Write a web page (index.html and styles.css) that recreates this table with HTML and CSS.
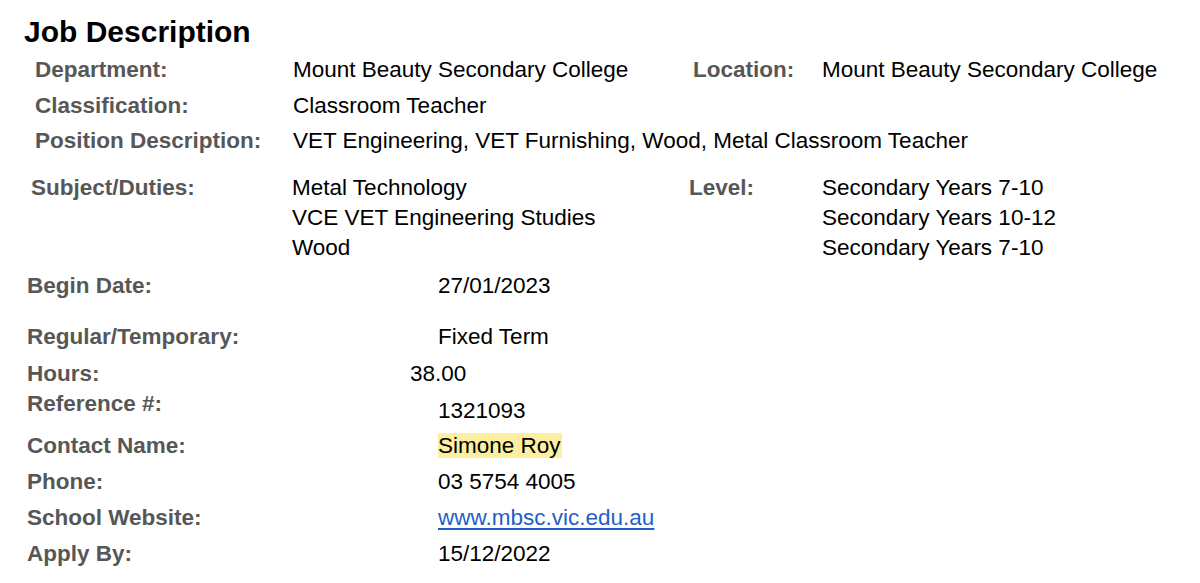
FILE: index.html
```html
<!DOCTYPE html>
<html lang="en">
<head>
<meta charset="utf-8">
<title>Job Description</title>
<link rel="stylesheet" href="styles.css">
</head>
<body>
<main class="job">
  <h1 class="title">Job Description</h1>

  <section class="grid-top">
    <div class="label">Department:</div>
    <div class="value">Mount Beauty Secondary College</div>
    <div class="label">Location:</div>
    <div class="value">Mount Beauty Secondary College</div>

    <div class="label">Classification:</div>
    <div class="value span3">Classroom Teacher</div>

    <div class="label">Position Description:</div>
    <div class="value span3">VET Engineering, VET Furnishing, Wood, Metal Classroom Teacher</div>
  </section>

  <section class="grid-subject">
    <div class="label">Subject/Duties:</div>
    <div class="value list">
      <div>Metal Technology</div>
      <div>VCE VET Engineering Studies</div>
      <div>Wood</div>
    </div>
    <div class="label">Level:</div>
    <div class="value list">
      <div>Secondary Years 7-10</div>
      <div>Secondary Years 10-12</div>
      <div>Secondary Years 7-10</div>
    </div>
  </section>

  <section class="details">
    <div class="row row-begin">
      <div class="label">Begin Date:</div>
      <div class="value">27/01/2023</div>
    </div>
    <div class="row row-regular">
      <div class="label">Regular/Temporary:</div>
      <div class="value">Fixed Term</div>
    </div>
    <div class="row row-hours">
      <div class="label">Hours:</div>
      <div class="value value-hours">38.00</div>
    </div>
    <div class="row row-ref">
      <div class="label">Reference #:</div>
      <div class="value value-ref">1321093</div>
    </div>
    <div class="row row-contact">
      <div class="label">Contact Name:</div>
      <div class="value"><span class="highlight">Simone Roy</span></div>
    </div>
    <div class="row">
      <div class="label">Phone:</div>
      <div class="value">03 5754 4005</div>
    </div>
    <div class="row">
      <div class="label">School Website:</div>
      <div class="value"><a class="link" href="#">www.mbsc.vic.edu.au</a></div>
    </div>
    <div class="row">
      <div class="label">Apply By:</div>
      <div class="value">15/12/2022</div>
    </div>
  </section>
</main>
</body>
</html>
```

FILE: styles.css
```css
html, body {
  margin: 0;
  padding: 0;
  background: #ffffff;
}

body {
  font-family: "Liberation Sans", Arial, Helvetica, sans-serif;
  color: #000000;
  font-size: 22.5px;
}

.job {
  padding-top: 15px;
}

.title {
  margin: 0 0 0 24px;
  font-size: 30px;
  line-height: 34px;
  font-weight: bold;
  color: #000;
}

.label {
  font-weight: bold;
  color: #575757;
  white-space: nowrap;
}

.value {
  color: #000;
  white-space: nowrap;
}

.grid-top {
  display: grid;
  grid-template-columns: 258px 400px 129px 1fr;
  grid-auto-rows: 35.5px;
  line-height: 35.5px;
  padding-left: 35px;
  margin-top: 3px;
}

.span3 {
  grid-column: span 3;
}

.grid-subject {
  display: grid;
  grid-template-columns: 261px 397px 133px 1fr;
  line-height: 30px;
  padding-left: 31px;
  margin-top: 14px;
}

.details {
  padding-left: 27px;
  margin-top: 5px;
}

.row {
  display: grid;
  grid-template-columns: 411px 1fr;
  line-height: 36px;
}

.row-regular {
  margin-top: 15px;
}

.row-hours {
  margin-top: 4px;
  line-height: 30px;
}

.value-hours {
  margin-left: -28px;
}

.row-ref {
  line-height: 30px;
}

.value-ref {
  padding-top: 7px;
}

.row-contact {
  margin-top: 2px;
}

.highlight {
  background: #fcef9f;
  padding: 0 1px 0 0;
}

.link {
  color: #1f5fc8;
  text-decoration: underline;
  text-underline-offset: 3px;
}
```
